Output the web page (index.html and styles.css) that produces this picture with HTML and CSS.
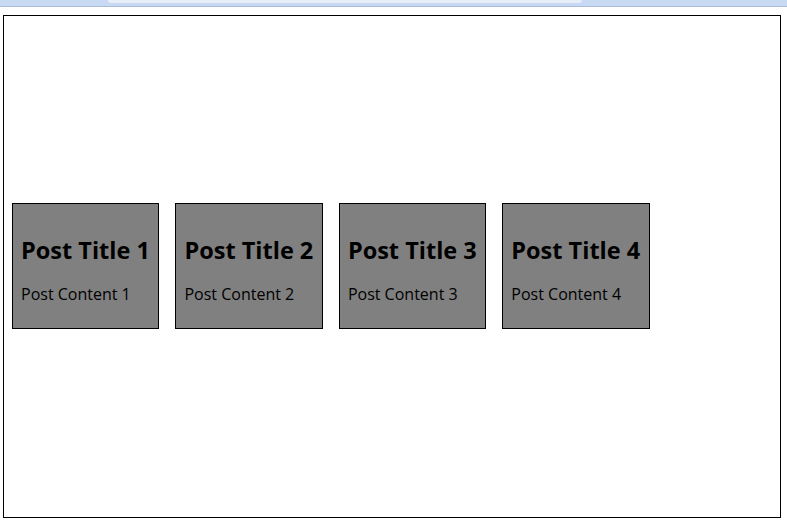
FILE: index.html
```html
<!DOCTYPE html>
<html>
<head>
<meta charset="utf-8">
<link rel="stylesheet" href="styles.css">
</head>
<body>
<div class="chrome"><div class="tab"></div></div>
<div class="frame">
  <div class="post"><h2>Post Title 1</h2><p>Post Content 1</p></div>
  <div class="post"><h2>Post Title 2</h2><p>Post Content 2</p></div>
  <div class="post"><h2>Post Title 3</h2><p>Post Content 3</p></div>
  <div class="post"><h2>Post Title 4</h2><p>Post Content 4</p></div>
</div>
</body>
</html>
```
FILE: styles.css
```css
html, body { margin: 0; padding: 0; background: #fff; }
body { font-family: "Open Sans", "Noto Sans", sans-serif; color: #000; }
.chrome {
  height: 6px;
  background: #c8daf3;
  border-bottom: 1px solid #a9bbd8;
  display: flex;
  padding-left: 108px;
}
.tab {
  width: 474px;
  height: 3px;
  background: #e8eef8;
  border-radius: 0 0 8px 8px;
}
.frame {
  margin: 8px 6px 0 3px;
  height: 503px;
  padding-bottom: 2px;
  box-sizing: border-box;
  border: 1px solid #000;
  display: flex;
  align-items: center;
}
.post {
  width: 19%;
  margin: 0 8px;
  padding: 8px;
  box-sizing: border-box;
  background: #808080;
  border: 1px solid #000;
}
.post h2 {
  font-size: 23.5px;
  font-weight: 700;
  line-height: 31px;
  margin: 23px 0 18px;
  white-space: nowrap;
}
.post p {
  font-size: 16px;
  line-height: 21px;
  margin: 18px 0 15px;
  white-space: nowrap;
}
```
